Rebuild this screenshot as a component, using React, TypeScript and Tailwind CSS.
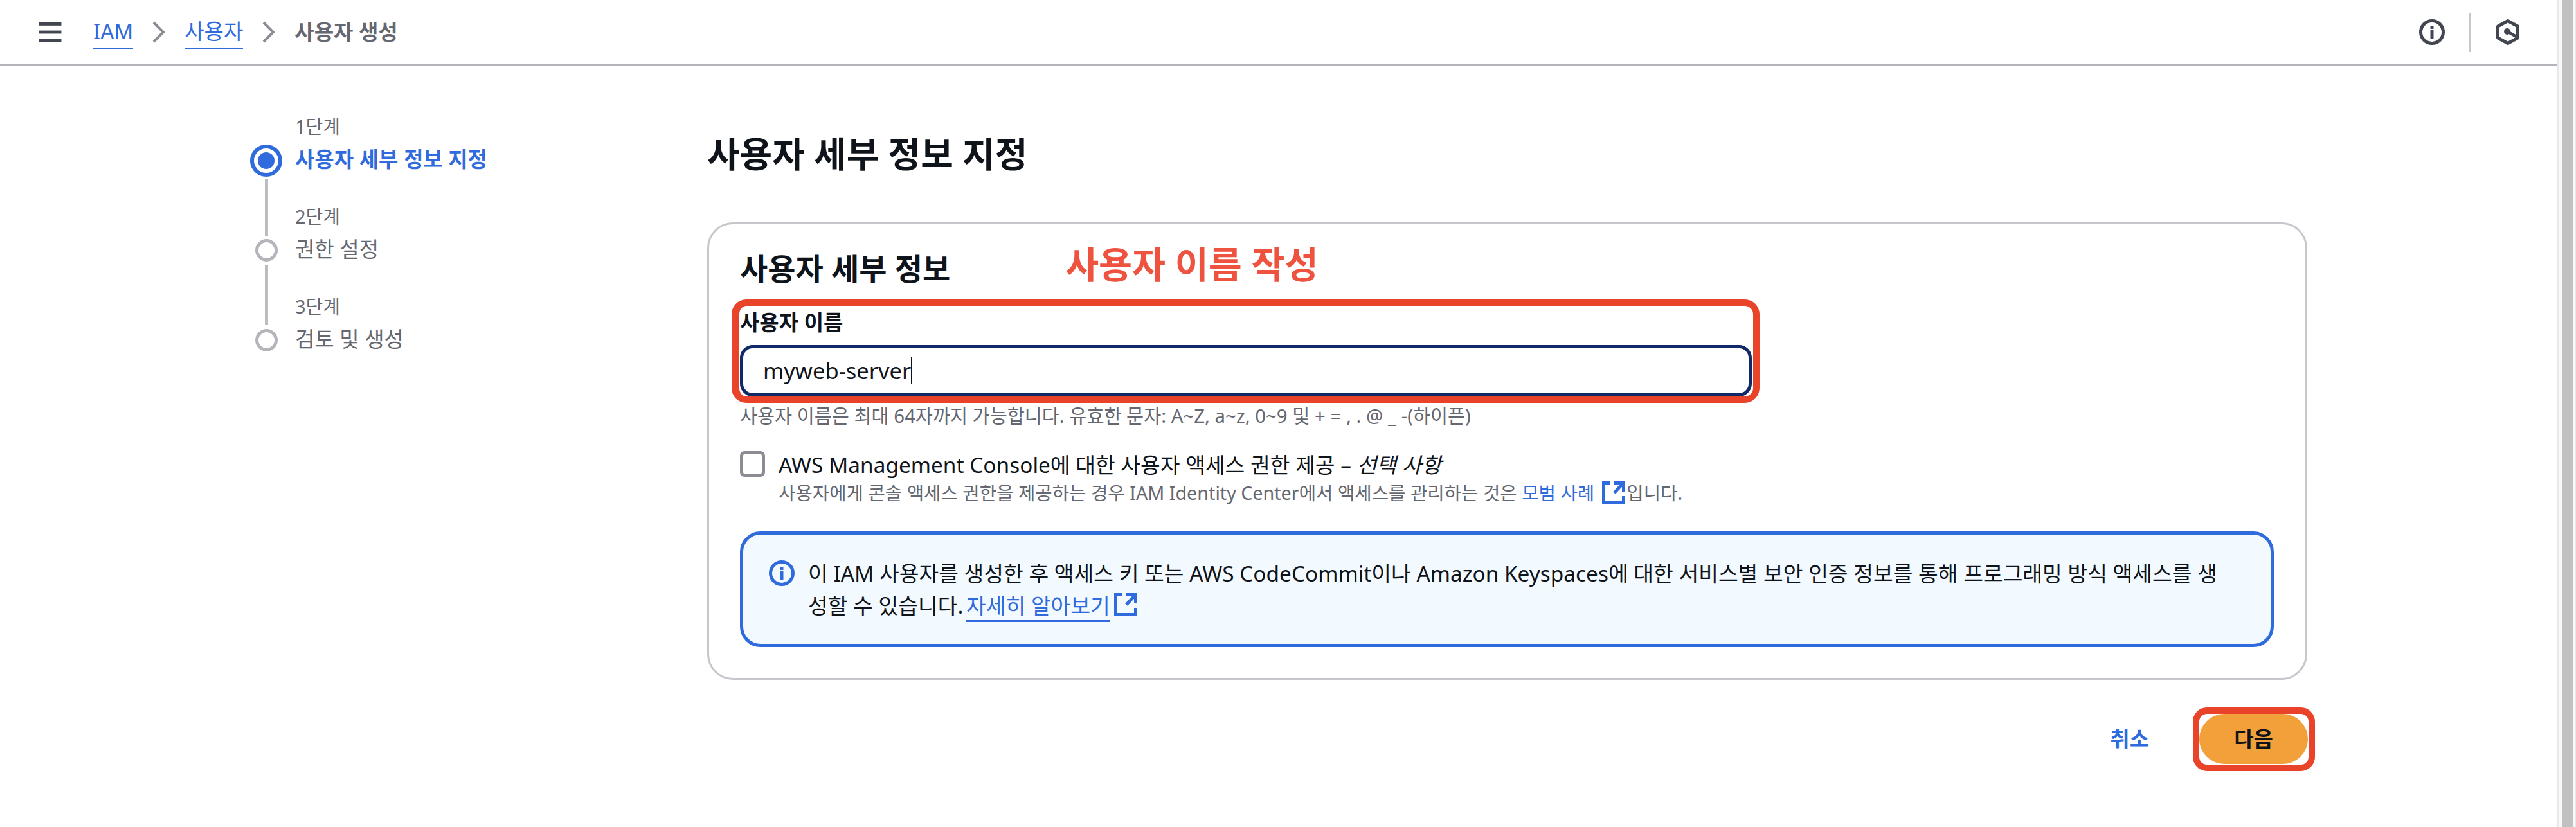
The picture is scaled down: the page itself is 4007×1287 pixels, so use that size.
import React from 'react';

const FONT = "font-['Noto_Sans','Noto_Sans_CJK_KR',sans-serif]";

function ExternalIcon({ className }: { className?: string }) {
  return (
    <svg viewBox="0 0 36 36" className={className} fill="none" stroke="currentColor" strokeWidth="5">
      <path d="M13 2.5H2.5v31h31V23" />
      <path d="M18 2.5h15.5V16M32 4L19 18" />
    </svg>
  );
}

function InfoIcon({ className }: { className?: string }) {
  return (
    <svg viewBox="0 0 40 40" className={className} fill="none" stroke="currentColor">
      <circle cx="20" cy="20" r="17.5" strokeWidth="5" />
      <rect x="17.5" y="17" width="5" height="13" fill="currentColor" stroke="none" />
      <rect x="17.5" y="10" width="5" height="5" fill="currentColor" stroke="none" />
    </svg>
  );
}

function Chevron() {
  return (
    <svg viewBox="0 0 20 34" className="w-[20px] h-[34px] mx-[30px] text-[#8c8c94]" fill="none" stroke="currentColor" strokeWidth="4">
      <path d="M2 2l15 15L2 32" />
    </svg>
  );
}

function Step({ n, title, active }: { n: number; title: string; active?: boolean }) {
  return (
    <div className="h-[140px] text-[#656871]">
      <div className="text-[29px] leading-[40px]">{n}단계</div>
      <div className={active ? 'mt-[6px] text-[33px] leading-[50px] font-bold text-[#2f6bdc]' : 'mt-[6px] text-[33px] leading-[50px]'}>{title}</div>
    </div>
  );
}

export default function App() {
  return (
    <div className={`${FONT} flex w-[4007px] h-[1287px] bg-white overflow-hidden text-[#0f141a]`}>
      <div className="flex-1 flex flex-col min-w-0">
        <header className="h-[103px] shrink-0 border-b-[3px] border-[#b4b4bb] flex items-center pl-[60px] pr-[59px]">
          <svg viewBox="0 0 36 32" className="w-[36px] h-[31px] text-[#424650]" fill="currentColor">
            <rect width="36" height="5" y="0" />
            <rect width="36" height="5" y="13" />
            <rect width="36" height="5" y="26" />
          </svg>
          <nav className="flex items-center ml-[49px] text-[33px] leading-[50px]">
            <span className="text-[#2f6bdc] border-b-[3px] border-[#2f6bdc]">IAM</span>
            <Chevron />
            <span className="text-[#2f6bdc] border-b-[3px] border-[#2f6bdc]">사용자</span>
            <Chevron />
            <span className="text-[#656871] font-semibold">사용자 생성</span>
          </nav>
          <div className="ml-auto flex items-center text-[#424650]">
            <InfoIcon className="w-[40px] h-[40px]" />
            <div className="w-[3px] h-[61px] bg-[#c6c6cd] ml-[38px] mr-[39px]" />
            <svg viewBox="0 0 36 40" className="w-[36px] h-[40px]" fill="none" stroke="currentColor">
              <path d="M18 2.5L33.5 11v18L18 37.5 2.5 29V11z" strokeWidth="5" strokeLinejoin="round" />
              <circle cx="17" cy="19" r="5" fill="currentColor" stroke="none" />
              <path d="M17 19l16 9" strokeWidth="4.5" />
            </svg>
          </div>
        </header>

        <div className="flex pt-[74px]">
          <aside className="w-[1100px] shrink-0 pl-[389px] flex gap-[20px]">
            <div className="w-[50px] flex flex-col items-center pt-[48px]">
              <div className="w-[50px] h-[50px] rounded-full border-[6px] border-[#2f6bdc] flex items-center justify-center">
                <div className="w-[26px] h-[26px] rounded-full bg-[#2f6bdc]" />
              </div>
              <div className="w-[5px] h-[88px] bg-[#bcbcc3] mt-[4px]" />
              <div className="w-[35px] h-[35px] rounded-full border-[5px] border-[#b4b4bb] mt-[5px]" />
              <div className="w-[5px] h-[94px] bg-[#bcbcc3] mt-[5px]" />
              <div className="w-[35px] h-[35px] rounded-full border-[5px] border-[#b4b4bb] mt-[6px]" />
            </div>
            <div>
              <Step n={1} title="사용자 세부 정보 지정" active />
              <Step n={2} title="권한 설정" />
              <Step n={3} title="검토 및 생성" />
            </div>
          </aside>

          <main className="w-[2489px] shrink-0 pt-[27px]">
            <h1 className="text-[55px] leading-[70px] font-bold">사용자 세부 정보 지정</h1>
            <section className="mt-[72px] h-[712px] rounded-[40px] border-[3px] border-[#c6c6cd] pl-[48px] pr-[49px]">
              <div className="flex items-start h-[128px] pt-[39px]">
                <h2 className="text-[47px] leading-[60px] font-bold">사용자 세부 정보</h2>
                <span className="ml-[179px] -mt-[11px] text-[56.5px] leading-[70px] font-semibold text-[#ee5340]">사용자 이름 작성</span>
              </div>
              <div className="relative w-[1574px]">
                <div className="absolute -left-[13px] -top-[11px] -right-[12px] -bottom-[10px] border-[10px] border-l-[12px] border-[#e9432a] rounded-[23px] pointer-events-none" />
                <label className="block text-[33px] leading-[50px] font-bold">사용자 이름</label>
                <div className="mt-[10px] h-[80px] rounded-[20px] border-[5px] border-[#0f2a66] flex items-center pl-[31px] text-[34.5px]">
                  <span className="border-r-[2px] border-[#0f141a] leading-[42px]">myweb-server</span>
                </div>
              </div>
              <p className="mt-[10px] text-[29.4px] leading-[40px] text-[#656871]">사용자 이름은 최대 64자까지 가능합니다. 유효한 문자: A~Z, a~z, 0~9 및 + = , . @ _ -(하이픈)</p>
              <div className="flex gap-[21px] mt-[34px]">
                <div className="w-[39px] h-[40px] shrink-0 rounded-[7px] border-[5px] border-[#8c8c94] mt-[1px]" />
                <div>
                  <div className="text-[33.4px] leading-[44px]">AWS Management Console에 대한 사용자 액세스 권한 제공 – <em>선택 사항</em></div>
                  <div className="text-[28.7px] leading-[44px] text-[#656871] flex items-center">
                    사용자에게 콘솔 액세스 권한을 제공하는 경우 IAM Identity Center에서 액세스를 관리하는 것은&nbsp;
                    <span className="text-[#2f6bdc]">모범 사례</span>
                    <ExternalIcon className="w-[36px] h-[36px] text-[#2f6bdc] ml-[12px] mr-[2px]" />
                    입니다.
                  </div>
                </div>
              </div>
              <div className="mt-[38px] w-[2386px] h-[180px] rounded-[32px] border-[5px] border-[#2f6bdc] bg-[#f3faff] flex pl-[40px] pt-[40px]">
                <InfoIcon className="w-[40px] h-[40px] shrink-0 text-[#2f6bdc]" />
                <div className="ml-[21px] text-[33.4px] leading-[50px] -mt-[5px] whitespace-nowrap">
                  이 IAM 사용자를 생성한 후 액세스 키 또는 AWS CodeCommit이나 Amazon Keyspaces에 대한 서비스별 보안 인증 정보를 통해 프로그래밍 방식 액세스를 생
                  <br />
                  성할 수 있습니다.{' '}
                  <span className="text-[#2f6bdc] border-b-[3px] border-[#2f6bdc] -ml-[4px]">자세히 알아보기</span>
                  <ExternalIcon className="inline-block w-[36px] h-[36px] text-[#2f6bdc] ml-[6px] align-[-4px]" />
                </div>
              </div>
            </section>
            <div className="flex items-center justify-end mt-[53px] -mr-[1px]">
              <span className="text-[33px] font-semibold text-[#2f6bdc]">취소</span>
              <div className="relative ml-[78px]">
                <div className="absolute -left-[10px] -top-[10px] -right-[11px] -bottom-[11px] border-[10px] border-[#e9432a] rounded-[22px] pointer-events-none" />
                <button className="block w-[169px] h-[78px] rounded-full bg-[#f2a03a] text-[33px] font-bold">다음</button>
              </div>
            </div>
          </main>
        </div>
      </div>

      <div className="w-[29px] shrink-0 bg-[#fafafa] border-l-[2px] border-r border-[#e8e8e8] pl-[6px] pr-[4px]">
        <div className="h-full bg-[#c1c1c1]" />
      </div>
    </div>
  );
}
